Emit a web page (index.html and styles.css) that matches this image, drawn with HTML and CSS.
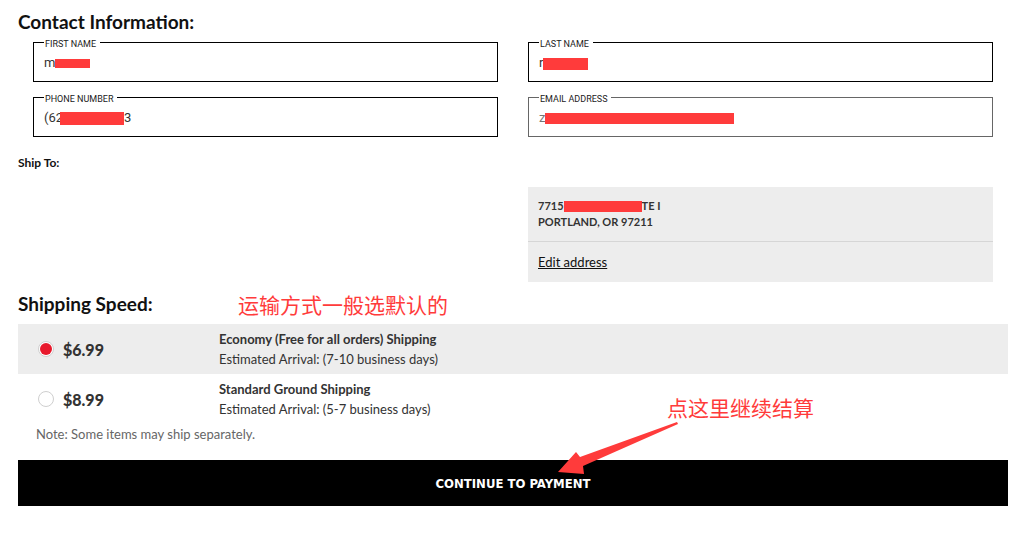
FILE: index.html
```html
<!DOCTYPE html>
<html>

<head>
    <title>Checkout - Shipping</title>
    <link rel="stylesheet" href="styles.css">
</head>

<body>
    <div class="page">
        <h2 class="page-title">Contact Information:</h2>

        <div class="contact-grid">
            <fieldset class="field">
                <legend>FIRST NAME</legend>
                <div class="field-value">m<span class="redact redact-first"></span></div>
            </fieldset>
            <fieldset class="field">
                <legend>LAST NAME</legend>
                <div class="field-value">r<span class="redact redact-last"></span></div>
            </fieldset>
            <fieldset class="field">
                <legend>PHONE NUMBER</legend>
                <div class="field-value">(62<span class="redact redact-phone"></span>3</div>
            </fieldset>
            <fieldset class="field field-muted">
                <legend>EMAIL ADDRESS</legend>
                <div class="field-value">z<span class="redact redact-email"></span></div>
            </fieldset>
        </div>

        <div class="ship-title">Ship To:</div>

        <div class="ship-grid">
            <div></div>
            <div class="address-box">
                <div class="address-lines">
                    <div>7715<span class="redact redact-street"></span>TE I</div>
                    <div>PORTLAND, OR 97211</div>
                </div>
                <div class="address-actions">
                    <a href="#" class="edit-link">Edit address</a>
                </div>
            </div>
        </div>

        <div class="speed-head">
            <h2 class="page-title speed-title">Shipping Speed:</h2>
            <span class="note-red">运输方式一般选默认的</span>
        </div>

        <div class="shipping-list">
            <label class="ship-option selected">
                <div class="option-price">
                    <span class="radio"></span>
                    <span>$6.99</span>
                </div>
                <div class="option-info">
                    <div class="option-name">Economy (Free for all orders) Shipping</div>
                    <div class="option-eta">Estimated Arrival: (7-10 business days)</div>
                </div>
            </label>
            <label class="ship-option">
                <div class="option-price">
                    <span class="radio"></span>
                    <span>$8.99</span>
                </div>
                <div class="option-info">
                    <div class="option-name">Standard Ground Shipping</div>
                    <div class="option-eta">Estimated Arrival: (5-7 business days)</div>
                </div>
            </label>
            <div class="ship-note">Note: Some items may ship separately.</div>

            <span class="note-red note-continue">点这里继续结算</span>
        </div>

        <button class="continue-btn">CONTINUE TO PAYMENT</button>
    </div>

    <!-- annotation arrow -->
    <svg class="arrow" width="1015" height="547" viewBox="0 0 1015 547">
        <polygon points="677,422 580,457 576,452 558,472 584,474 583,466 678,424" fill="#ff3b3b" />
    </svg>
</body>

</html>
```

FILE: styles.css
```css
body {
    margin: 0;
    font-family: Lato, "Noto Sans", sans-serif;
    color: #333;
    background: white;
}

.page {
    width: 990px;
    margin-left: 18px;
}

.page-title {
    margin: 11px 0 2px;
    font-size: 19px;
    line-height: 22px;
    font-weight: 700;
    color: #111;
}

.contact-grid {
    display: grid;
    grid-template-columns: 465px 465px;
    column-gap: 30px;
    row-gap: 8px;
    padding: 0 15px;
}

.field {
    margin: 0;
    padding: 0 10px;
    height: 47px;
    box-sizing: border-box;
    border: 1px solid #000;
    min-width: 0;
}

.field legend {
    padding: 4px 4px 0 1px;
    font-family: Roboto, "Noto Sans", sans-serif;
    font-size: 9px;
    line-height: 10px;
    color: #222;
}

.field-muted {
    border-color: #666;
}

.field-muted .field-value {
    color: #777;
}

.field-value {
    padding-top: 6px;
    font-family: Roboto, "Noto Sans", sans-serif;
    font-size: 13px;
    line-height: 16px;
    color: #333;
}

.redact {
    display: inline-block;
    background: #ff3b3b;
    vertical-align: middle;
}

.redact-first {
    width: 35px;
    height: 9px;
}

.redact-last {
    width: 45px;
    height: 12px;
}

.redact-phone {
    width: 64px;
    height: 13px;
    margin-left: -3px;
}

.redact-email {
    width: 189px;
    height: 11px;
}

.redact-street {
    width: 78px;
    height: 11px;
    vertical-align: -2px;
}

.ship-title {
    margin-top: 18px;
    font-size: 12px;
    line-height: 16px;
    font-weight: 700;
    color: #111;
}

.ship-grid {
    display: grid;
    grid-template-columns: 465px 465px;
    column-gap: 30px;
    padding: 0 15px;
    margin-top: 16px;
}

.address-box {
    background: #ededed;
}

.address-lines {
    padding: 11px 10px;
    border-bottom: 1px solid #d6d6d6;
    font-size: 11px;
    line-height: 16px;
    font-weight: 700;
    color: #333;
}

.address-actions {
    padding: 9px 10px 11px;
}

.edit-link {
    font-size: 13px;
    line-height: 18px;
    color: #111;
    text-decoration: underline;
    display: inline-block;
}

.speed-head {
    display: flex;
    align-items: center;
    margin-top: 11px;
}

.speed-title {
    margin: 0;
    width: 220px;
}

.note-red {
    font-family: "Noto Sans CJK SC", sans-serif;
    font-size: 21px;
    color: #ff3b3b;
    line-height: 22px;
}

.shipping-list {
    position: relative;
    margin-top: 9px;
}

.ship-option {
    display: grid;
    grid-template-columns: 201px 1fr;
    height: 50px;
    box-sizing: border-box;
    padding: 5px 0;
    cursor: pointer;
}

.ship-option.selected {
    background: #ededed;
}

.option-price {
    display: flex;
    align-items: center;
    gap: 9px;
    padding-left: 20px;
    font-size: 16px;
    font-weight: 900;
    color: #333;
}

.radio {
    width: 16px;
    height: 16px;
    box-sizing: border-box;
    border-radius: 50%;
    border: 1px solid #cfcfcf;
    background: white;
    display: flex;
    align-items: center;
    justify-content: center;
}

.selected .radio::after {
    content: "";
    width: 12px;
    height: 12px;
    border-radius: 50%;
    background: #e8192c;
}

.option-name {
    font-size: 13px;
    line-height: 20px;
    font-weight: 700;
    color: #333;
}

.option-eta {
    font-size: 13px;
    line-height: 20px;
    color: #333;
}

.ship-note {
    padding-left: 18px;
    font-size: 13px;
    line-height: 20px;
    color: #666;
}

.note-continue {
    position: absolute;
    left: 649px;
    top: 72px;
}

.continue-btn {
    display: block;
    width: 990px;
    height: 46px;
    margin-top: 16px;
    border: none;
    background: #000;
    color: white;
    font-family: "DejaVu Sans Condensed", "DejaVu Sans", sans-serif;
    font-stretch: condensed;
    font-size: 13px;
    font-weight: 700;
    cursor: pointer;
}

.arrow {
    position: absolute;
    left: 0;
    top: 0;
    pointer-events: none;
}
```
